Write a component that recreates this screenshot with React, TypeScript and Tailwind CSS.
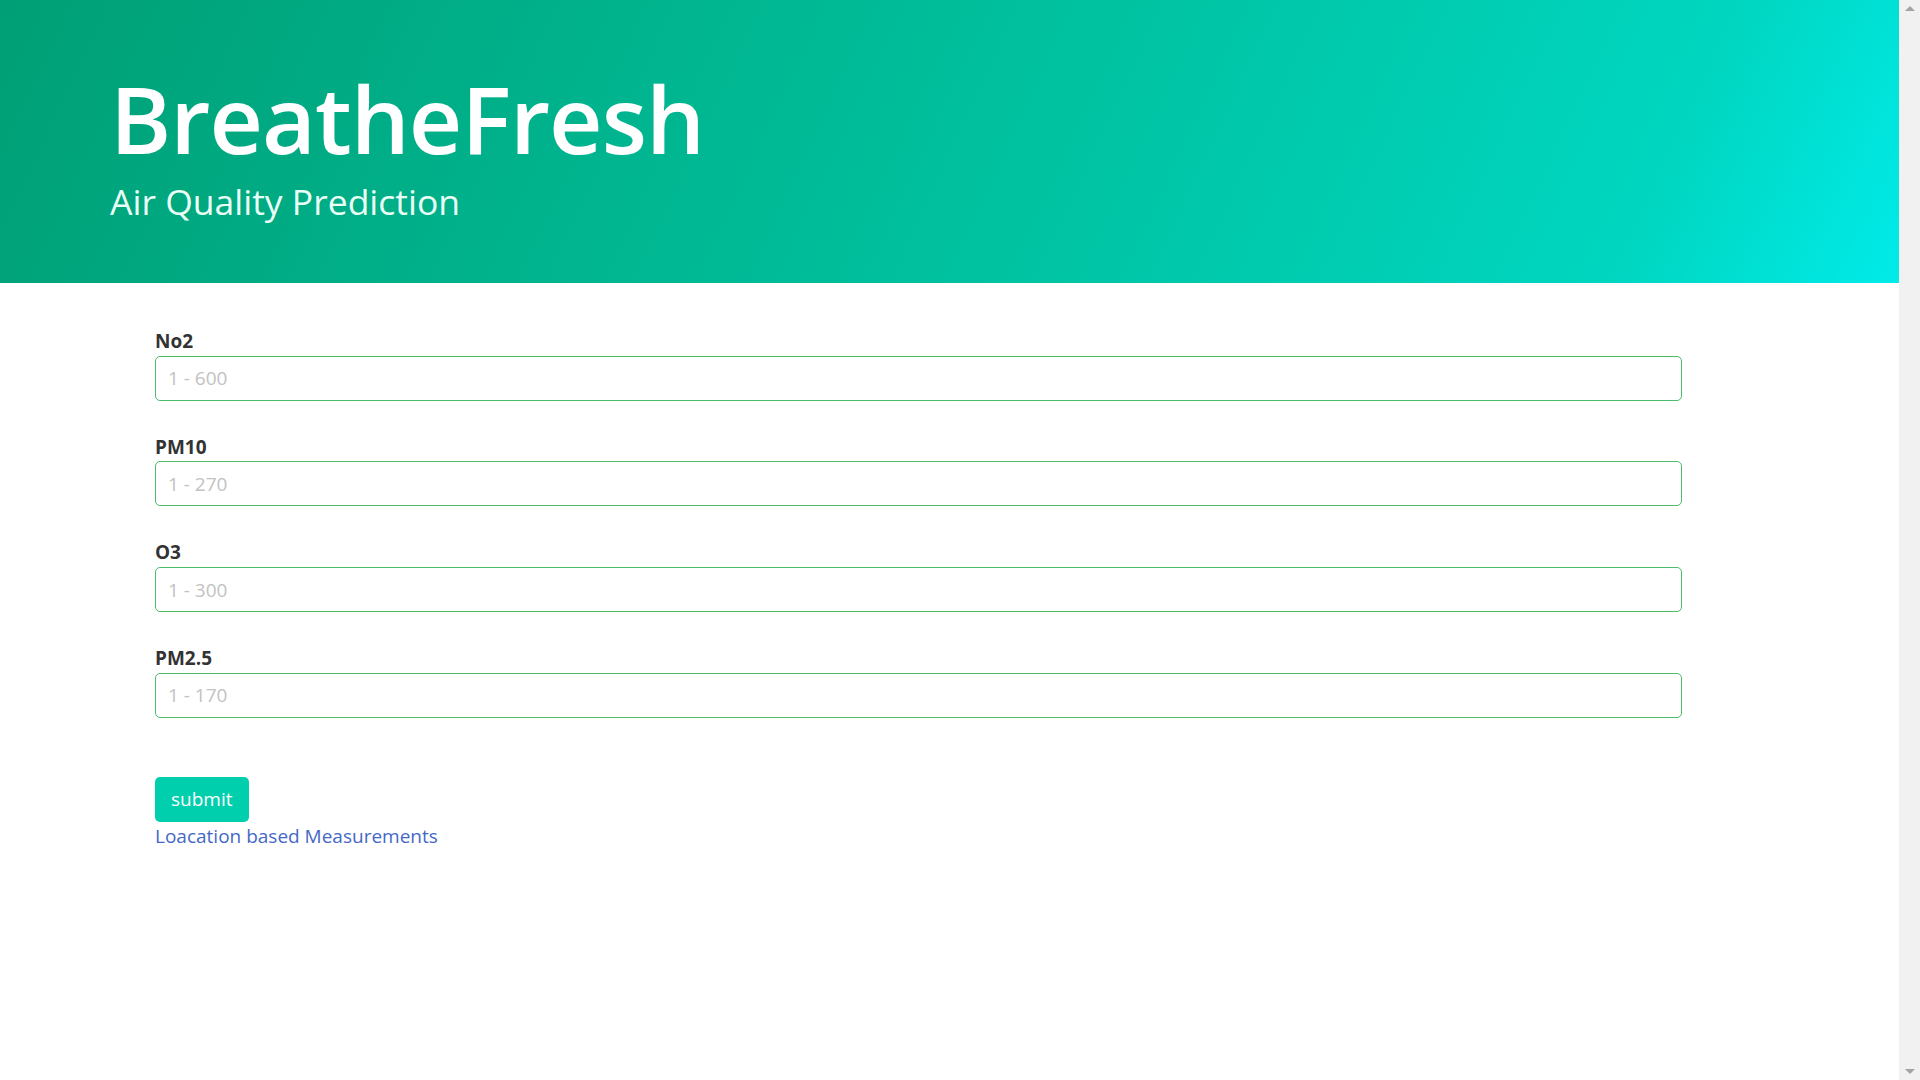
const fields = [
  { label: "No2", placeholder: "1 - 600" },
  { label: "PM10", placeholder: "1 - 270" },
  { label: "O3", placeholder: "1 - 300" },
  { label: "PM2.5", placeholder: "1 - 170" },
];

function Scrollbar() {
  return (
    <aside className="w-[21px] shrink-0 bg-[#f1f1f1] flex flex-col justify-between items-center py-[6px] h-[1080px]">
      <span className="w-0 h-0 border-x-[5px] border-x-transparent border-b-[5px] border-b-[#a3a3a3]" />
      <span className="w-0 h-0 border-x-[5px] border-x-transparent border-t-[5px] border-t-[#a3a3a3]" />
    </aside>
  );
}

export default function App() {
  return (
    <div className="flex font-['Open_Sans',sans-serif] bg-white">
      <main className="flex-1 min-w-0">
        <header className="h-[283px] bg-[linear-gradient(115deg,#009f75_0%,#00bf9c_50%,#00d6c0_86%,#00ebe9_100%)] pl-[110px] pt-[72px]">
          <h1 className="text-[93px] leading-none font-semibold text-white tracking-[-1px]">
            BreatheFresh
          </h1>
          <p className="text-[35.5px] leading-[1.3] text-[#eafff6] mt-[13px]">
            Air Quality Prediction
          </p>
        </header>

        <form className="ml-[155px] w-[1527px] pt-[46px]">
          {fields.map((f) => (
            <div key={f.label} className="mb-[34px]">
              <label className="block text-[19px] font-bold text-[#333] leading-[1.3] mb-[2px]">
                {f.label}
              </label>
              <input
                type="text"
                placeholder={f.placeholder}
                className="w-full h-[45px] rounded-[5px] border border-[#4cbb6a] px-[12px] text-[19px] text-[#333] placeholder:text-[#c2c2c2] outline-none"
              />
            </div>
          ))}

          <button
            type="button"
            className="mt-[25px] h-[45px] px-[16px] rounded-[5px] bg-[#00cfae] text-white text-[19px]"
          >
            submit
          </button>
          <div>
            <a href="#" className="text-[19px] text-[#4568c8]">
              Loacation based Measurements
            </a>
          </div>
        </form>
      </main>
      <Scrollbar />
    </div>
  );
}
